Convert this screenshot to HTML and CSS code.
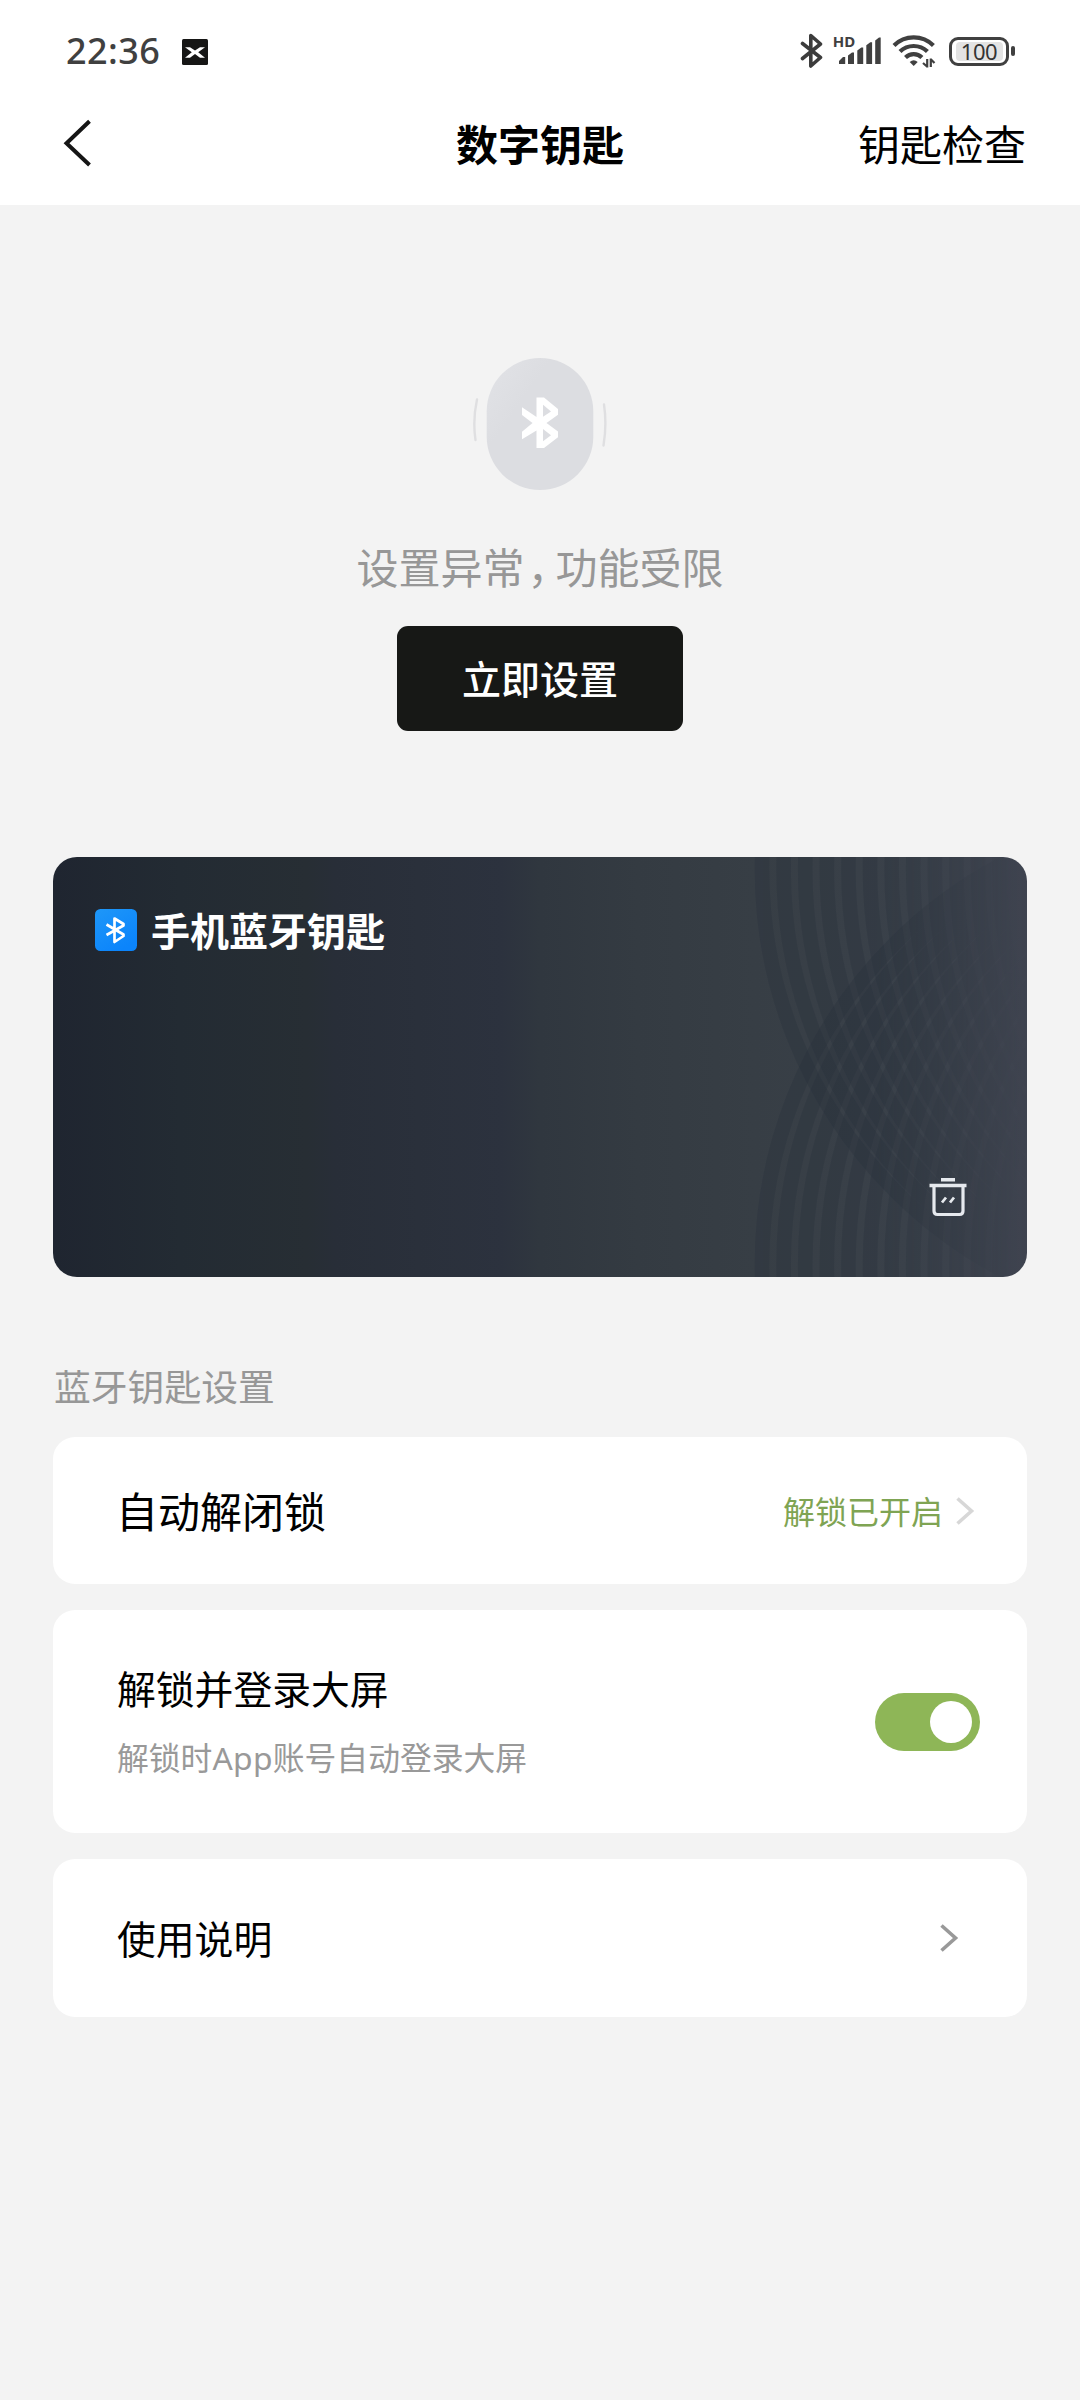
FILE: index.html
```html
<!DOCTYPE html>
<html lang="zh-CN">
<head>
<meta charset="utf-8">
<title>数字钥匙</title>
<link rel="stylesheet" href="styles.css">
</head>
<body>
<header class="top">
  <div class="status">
    <span class="clock">22:36</span>
    <svg class="app-icon" width="26" height="26" viewBox="0 0 26 26"><rect width="26" height="26" rx="1.500" fill="#161615"/><path d="M3 8.300h5l5 3.200 5-3.200h5l-6.800 4.900L23 18.700h-5L13 15l-5 3.700H3l6.800-5.500z" fill="#fff"/></svg>
    <div class="status-icons">
      <svg width="24" height="36" viewBox="0 0 24 36" fill="none" stroke="#3c3c3c" stroke-width="3.600" stroke-linejoin="round" stroke-linecap="round"><path d="M2.500 10.500 20.500 24.500 10.800 33V2.500l9.700 8.500L2.500 25.500"/></svg>
      <svg class="signal" width="52" height="42" viewBox="-4 -6 52 42" fill="#404040"><text class="hd" x="-1.200" y="13.500">HD</text><path d="M5 31v-3l4-4h2.200v7zM14 31v-8.500l4-3h2V31zM23.300 31V17.500l4-3h1.900V31zM32.300 31V12.300l4-3h1.800V31zM41.200 31V7.500l3.800-3h1.700V31z"/></svg>
      <svg class="wifi" width="44" height="36" viewBox="0 0 44 36" fill="none" stroke="#404040" stroke-width="4.200"><path d="M2 12.500a28 28 0 0 1 39.400 0M8 18.600a19.500 19.500 0 0 1 27.400 0M13.500 24.500a11.700 11.700 0 0 1 16.400 0"/><path d="M17.700 29q4-3.500 8 0l-4 4z" fill="#404040" stroke="none"/><path d="M35.200 26v8.500M38.800 25.500V34M35 33.500l-4-3.500M39 26.500l3.500 3.500" stroke-width="2.200"/></svg>
      <div class="battery"><span class="battery-level">100</span></div>
      <i class="battery-tip"></i>
    </div>
  </div>
  <nav class="nav">
    <svg width="30" height="48" viewBox="0 0 30 48" fill="none" stroke="#151515" stroke-width="4"><path d="M28.500 2.200 5.500 24.200 28.500 46"/></svg>
    <h1 class="nav-title">数字钥匙</h1>
    <a class="nav-action">钥匙检查</a>
  </nav>
</header>
<main>
  <section class="hero">
    <svg width="140" height="150" viewBox="0 0 140 150" fill="none">
      <defs><linearGradient id="pill" x1="0" y1="0" x2=".35" y2=".3"><stop offset="0" stop-color="#e2e3e7"/><stop offset="1" stop-color="#dcdde1"/></linearGradient></defs>
      <rect x="16.700" y="8" width="106.600" height="132" rx="53.300" fill="url(#pill)"/>
      <path d="M7 49.500Q2.500 70 5.500 90M134 54.500q3 20-.5 41" stroke="#dfdfe1" stroke-width="2.400" stroke-linecap="round"/>
      <path fill="#fff" fill-rule="evenodd" d="M66.500 47.500h7.500L88 59v5.700L76.500 73 88 81.500v5.700L74 98h-7.500V80.500L52 89.300v-7.500L62.500 73 52 65v-7.800L66.500 67zM73 54.700v12l8-5.300zM73 79v12.300l8-6z"/>
    </svg>
    <p class="hero-text">设置异常<span class="comma">，</span>功能受限</p>
    <button class="hero-button">立即设置</button>
  </section>

  <section class="key-card">
    <svg class="waves" width="974" height="420" viewBox="0 0 974 420" fill="none">
      <defs>
        <linearGradient id="fade" x1="700" x2="974" y1="0" y2="0" gradientUnits="userSpaceOnUse"><stop stop-color="#fff"/><stop offset=".45" stop-color="#fff"/><stop offset="1" stop-color="#000"/></linearGradient>
        <mask id="fadeMask" maskUnits="userSpaceOnUse" x="0" y="0" width="974" height="420"><rect width="974" height="420" fill="url(#fade)"/></mask>
        <g id="rings" stroke="#252e3a" stroke-width="14.500">
          <circle cx="1162" cy="13" r="453"/><circle cx="1183.600" cy="13" r="453"/><circle cx="1205.200" cy="13" r="453"/><circle cx="1226.800" cy="13" r="453"/><circle cx="1248.400" cy="13" r="453"/><circle cx="1270" cy="13" r="453"/><circle cx="1291.600" cy="13" r="453"/><circle cx="1313.200" cy="13" r="453"/><circle cx="1334.800" cy="13" r="453"/><circle cx="1356.400" cy="13" r="453"/><circle cx="1378" cy="13" r="453"/><circle cx="1399.600" cy="13" r="453"/>
        </g>
      </defs>
      <g mask="url(#fadeMask)">
        <use href="#rings" opacity=".27"/>
        <g transform="matrix(1 0 0 -1 0 420)"><use href="#rings" opacity=".27"/></g>
      </g>
    </svg>
    <div class="key-head">
      <svg width="42" height="42" viewBox="0 0 42 42" fill="none"><defs><linearGradient id="blue" x1="0" y1="0" x2=".6" y2="1"><stop stop-color="#1e97f8"/><stop offset="1" stop-color="#0b84fb"/></linearGradient></defs><rect width="42" height="42" rx="5.500" fill="url(#blue)"/><path d="M11.500 15.500 28.500 25.500V27L19.500 33V9.500L28.500 15V16.500L11.500 26" stroke="#fff" stroke-width="2.700" stroke-linejoin="round"/></svg>
      <h2 class="key-title">手机蓝牙钥匙</h2>
    </div>
    <svg class="trash" width="38" height="40" viewBox="0 0 38 40" fill="none" stroke="#e6e9ee"><path d="M12 2.800h14M.500 8.500h37" stroke-width="3.600"/><path d="M5 8v26q0 3.500 3.500 3.500h22q3.500 0 3.500-3.500V8" stroke-width="3.200"/><path d="M13 25.500l4-5M21 25.500l4-5" stroke-width="2.800"/></svg>
  </section>

  <h3 class="section-label">蓝牙钥匙设置</h3>
  <section class="list">
    <div class="row row-auto">
      <span class="row-title large">自动解闭锁</span>
      <span class="row-value">解锁已开启</span>
      <svg width="20" height="28" viewBox="0 0 20 28" fill="none" stroke="#d7d7d7" stroke-width="3.600"><path d="M2.500 1.500 16.500 14 2.500 26.500"/></svg>
    </div>
    <div class="row row-login">
      <div class="row-copy">
        <span class="row-title">解锁并登录大屏</span>
        <span class="row-note">解锁时<span class="latin">App</span>账号自动登录大屏</span>
      </div>
      <span class="switch"><i class="knob"></i></span>
    </div>
    <div class="row row-help">
      <span class="row-title">使用说明</span>
      <svg width="20" height="28" viewBox="0 0 20 28" fill="none" stroke="#999" stroke-width="3.600"><path d="M2.500 1.500 16.500 14 2.500 26.500"/></svg>
    </div>
  </section>
</main>
</body>
</html>
```
FILE: styles.css
```css
* { box-sizing: border-box; }
body {
  margin: 0;
  min-height: 2400px;
  background: #f3f3f3;
  color: #000;
  font-family: "Noto Sans CJK SC", sans-serif;
}
h1, h2, h3, p { margin: 0; font-weight: 400; }
svg { display: block; flex: none; }

.top { background: #fff; height: 205px; }
.status {
  display: flex;
  align-items: center;
  height: 81px;
  padding: 21px 65px 0 66px;
}
.clock {
  width: 116px;
  font: 500 36px/60px "Noto Sans", sans-serif;
  letter-spacing: .4px;
  color: #404040;
}
.app-icon { margin-top: 1px; }
.status-icons { display: flex; align-items: center; margin-left: auto; }
.signal { margin: -6px 0 0 6px; }
.hd { font: 700 15px "Noto Sans", sans-serif; }
.wifi { margin-left: 10px; }
.battery {
  width: 60px;
  height: 29px;
  margin-left: 13px;
  padding: 2px 3.500px;
  border: 3px solid #404040;
  border-radius: 9px;
}
.battery-level {
  display: block;
  height: 19px;
  border-radius: 4px;
  background: #e3e3e3;
  color: #333;
  font: 400 22px/19px "Noto Sans", sans-serif;
  letter-spacing: -.5px;
  text-align: center;
}
.battery-tip { width: 4px; height: 10px; margin-left: 2px; border-radius: 2px; background: #404040; }

.nav {
  display: grid;
  grid-template-columns: 1fr auto 1fr;
  align-items: center;
  height: 124px;
  padding: 0 54px;
}
.nav > svg { margin-left: 7px; }
.nav-title { font-size: 42px; line-height: 60px; font-weight: 700; }
.nav-action { justify-self: end; font-size: 42px; line-height: 60px; }

.hero { display: flex; flex-direction: column; align-items: center; padding-top: 145px; }
.hero-text { margin-top: 36px; font-size: 42px; line-height: 60px; color: #979797; }
.comma { padding: 0 7px 0 3px; font-feature-settings: "halt"; }
.hero-button {
  width: 286px;
  height: 105px;
  margin-top: 30px;
  padding: 0 0 4px;
  border: 0;
  border-radius: 11px;
  background: #171816;
  color: #fff;
  font: 500 39px/60px "Noto Sans CJK SC", sans-serif;
}

.key-card {
  position: relative;
  display: flex;
  flex-direction: column;
  justify-content: space-between;
  height: 420px;
  margin: 126px 53px 0;
  padding: 48px 60px 60px 42px;
  border-radius: 24px;
  overflow: hidden;
  background: linear-gradient(90deg, #1f2530, #232b33 13%, #272e34 26%, #282e38 29%, #2c323e 46%, #30373f 50%, #343b42 60%, #373e45 72%, #3a414a 88%, #3f4450);
}
.waves { position: absolute; inset: 0; }
.key-head { position: relative; display: flex; align-items: center; height: 50px; gap: 14px; }
.key-title { margin-top: -3px; font-size: 39px; line-height: 50px; font-weight: 700; color: #fff; }
.trash { position: relative; align-self: flex-end; }

.section-label { margin: 83px 54px 27px; font-size: 36.800px; line-height: 50px; color: #979797; }
.list { display: grid; gap: 26px; margin: 0 53px; }
.row {
  display: flex;
  align-items: center;
  justify-content: space-between;
  background: #fff;
  border-radius: 22px;
  padding-left: 64px;
}
.row-auto { height: 147px; padding: 0 52px 0 63px; }
.row-login { height: 223px; padding-right: 47px; }
.row-help { height: 158px; padding-right: 68px; }
.row-title { margin-top: -2px; font-size: 38.800px; line-height: 50px; }
.row-copy .row-title { margin-top: 1px; }
.row-title.large { margin-top: -1px; font-size: 42px; }
.row-value { margin: -2px 12px 0 auto; font-size: 32px; line-height: 48px; color: #7fa453; }
.row-copy { display: flex; flex-direction: column; gap: 20px; }
.row-note { font-size: 31.800px; line-height: 48px; color: #999; }
.latin { font-family: "Noto Sans", sans-serif; letter-spacing: .3px; }
.switch {
  display: flex;
  align-items: center;
  justify-content: flex-end;
  width: 105px;
  height: 58px;
  padding: 8px;
  border-radius: 29px;
  background: #8eb657;
}
.knob { width: 42px; height: 42px; border-radius: 50%; background: #fff; }
```
